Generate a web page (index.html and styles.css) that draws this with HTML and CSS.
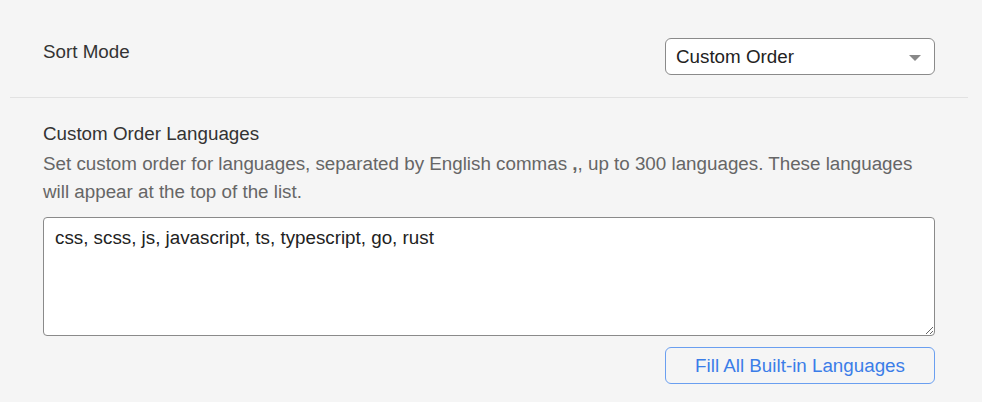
FILE: index.html
```html
<!DOCTYPE html>
<html>
<head>
<meta charset="utf-8">
<link rel="stylesheet" href="styles.css">
</head>
<body>
<div class="panel">
  <div class="row row-sort">
    <div class="label">Sort Mode</div>
    <div class="select">
      <span class="select-text">Custom Order</span>
      <span class="caret"></span>
    </div>
  </div>
  <div class="row row-custom">
    <div class="label">Custom Order Languages</div>
    <div class="desc">Set custom order for languages, separated by English commas <b class="code">,</b>, up to 300 languages. These languages will appear at the top of the list.</div>
    <textarea class="area">css, scss, js, javascript, ts, typescript, go, rust</textarea>
    <div class="actions">
      <button class="btn">Fill All Built-in Languages</button>
    </div>
  </div>
</div>
</body>
</html>
```
FILE: styles.css
```css
* { box-sizing: border-box; }
html, body { margin: 0; padding: 0; }
body {
  background: #f5f5f5;
  font-family: "Liberation Sans", Arial, sans-serif;
  font-size: 18.8px;
  color: #333;
}
.panel {
  padding: 0 14px 0 10px;
}
.row {
  padding: 0 33px;
}
.row-sort {
  display: flex;
  justify-content: space-between;
  align-items: flex-start;
  padding-top: 38px;
  padding-bottom: 22px;
  border-bottom: 1px solid #e2e2e2;
}
.row-sort .label {
  padding-top: 1px;
  line-height: 26px;
}
.select {
  width: 270px;
  height: 37px;
  background: #fff;
  border: 1px solid #8a8a8a;
  border-radius: 6px;
  display: flex;
  align-items: center;
  justify-content: space-between;
  padding: 0 13px 0 10px;
  color: #222;
}
.caret {
  width: 0;
  height: 0;
  border-left: 6px solid transparent;
  border-right: 6px solid transparent;
  border-top: 6px solid #888;
  margin-top: 2px;
}
.row-custom {
  padding-top: 23px;
}
.row-custom .label {
  line-height: 26px;
}
.desc {
  color: #666;
  line-height: 28px;
  margin-top: 3px;
}
.code { font-weight: bold; }
.area {
  display: block;
  width: 100%;
  height: 119px;
  margin-top: 11px;
  border: 1px solid #8a8a8a;
  border-radius: 4px;
  background: #fff;
  font-family: "Liberation Sans", Arial, sans-serif;
  font-size: 18.8px;
  color: #222;
  padding: 9px 11px;
  resize: vertical;
  outline: none;
}
.actions {
  display: flex;
  justify-content: flex-end;
  margin-top: 11px;
}
.btn {
  width: 270px;
  height: 37px;
  background: transparent;
  border: 1px solid #6a9ff0;
  border-radius: 6px;
  color: #3b7de8;
  font-family: "Liberation Sans", Arial, sans-serif;
  font-size: 18.8px;
  padding: 0;
}
```
